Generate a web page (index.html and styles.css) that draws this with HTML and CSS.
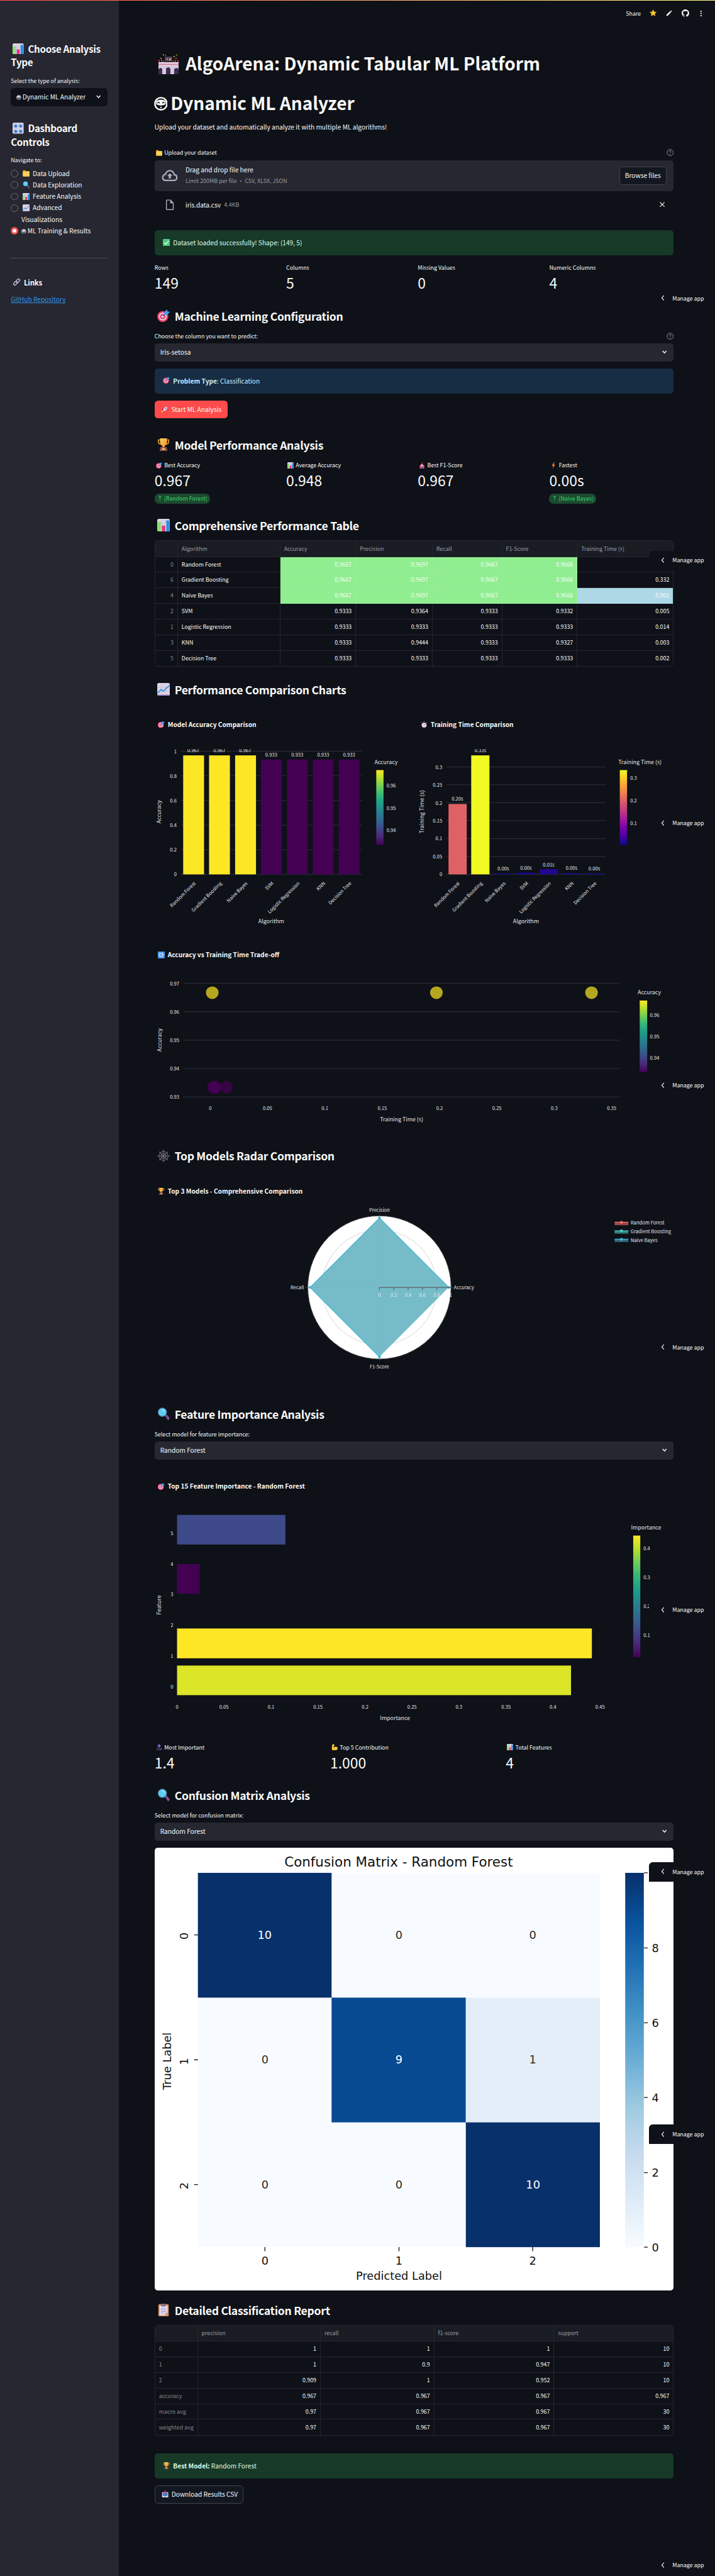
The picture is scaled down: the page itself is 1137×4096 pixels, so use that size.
FILE: index.html
```html
<!DOCTYPE html>
<html lang="en">
<head>
<meta charset="utf-8">
<title>AlgoArena</title>
<link rel="stylesheet" href="styles.css">
</head>
<body>
<svg class="defs" width="0" height="0" aria-hidden="true">
  <defs>
    <linearGradient id="viridis" x1="0" y1="1" x2="0" y2="0"><stop offset="0" stop-color="#440154"/><stop offset=".11" stop-color="#482878"/><stop offset=".22" stop-color="#3e4989"/><stop offset=".33" stop-color="#31688e"/><stop offset=".44" stop-color="#26828e"/><stop offset=".56" stop-color="#1f9e89"/><stop offset=".67" stop-color="#35b779"/><stop offset=".78" stop-color="#6ece58"/><stop offset=".89" stop-color="#b5de2b"/><stop offset="1" stop-color="#fde725"/></linearGradient>
    <linearGradient id="plasma" x1="0" y1="1" x2="0" y2="0"><stop offset="0" stop-color="#0d0887"/><stop offset=".11" stop-color="#46039f"/><stop offset=".22" stop-color="#7201a8"/><stop offset=".33" stop-color="#9c179e"/><stop offset=".44" stop-color="#bd3786"/><stop offset=".56" stop-color="#d8576b"/><stop offset=".67" stop-color="#ed7953"/><stop offset=".78" stop-color="#fb9f3a"/><stop offset=".89" stop-color="#fdca26"/><stop offset="1" stop-color="#f0f921"/></linearGradient>
    <linearGradient id="blues" x1="0" y1="1" x2="0" y2="0"><stop offset="0" stop-color="#f7fbff"/><stop offset=".125" stop-color="#deebf7"/><stop offset=".25" stop-color="#c6dbef"/><stop offset=".375" stop-color="#9ecae1"/><stop offset=".5" stop-color="#6baed6"/><stop offset=".625" stop-color="#4292c6"/><stop offset=".75" stop-color="#2171b5"/><stop offset=".875" stop-color="#08519c"/><stop offset="1" stop-color="#08306b"/></linearGradient>
    <linearGradient id="gold" x1="0" y1="0" x2="1" y2="1"><stop offset="0" stop-color="#ffd45a"/><stop offset="1" stop-color="#f08a2c"/></linearGradient>
  </defs>
  <symbol id="e-bars" viewBox="0 0 32 32"><rect width="32" height="32" rx="4" fill="#dcd5e6"/><path d="M0 11h32M0 21h32M11 0v32M21 0v32" stroke="#c2b8d0" stroke-width="1"/><path d="M1 8h8v24H4a4 4 0 0 1-3-3z" fill="#86e06c"/><rect x="12" y="17" width="8" height="15" fill="#e8337a"/><path d="M23 4h8v25a4 4 0 0 1-3 3h-5z" fill="#2f8de0"/></symbol>
  <symbol id="e-line" viewBox="0 0 32 32"><rect width="32" height="32" rx="4" fill="#dcd5e6"/><path d="M0 11h32M0 21h32M11 0v32M21 0v32" stroke="#c2b8d0" stroke-width="1"/><path d="M1 26 10 16l5 5L31 6" fill="none" stroke="#3a94dd" stroke-width="3"/><path d="M1 29q0 3 4 3h22q4 0 4-3z" fill="#b69ad0"/></symbol>
  <symbol id="e-folder" viewBox="0 0 32 32"><path d="M1 4a2 2 0 0 1 2-2h9l3 4h14a2 2 0 0 1 2 2v20a2 2 0 0 1-2 2H3a2 2 0 0 1-2-2z" fill="#e9a93a"/><rect x="1" y="9" width="30" height="21" rx="2" fill="#ffd057"/></symbol>
  <symbol id="e-search" viewBox="0 0 32 32"><path d="m19 20 4-3 8 9q1 5-4 6z" fill="#83508f"/><circle cx="13" cy="12" r="11.5" fill="#4a87b8"/><circle cx="13" cy="12" r="9.5" fill="#5fcdf0"/><path d="M12 5q6 0 6 6" stroke="#a5e8fb" stroke-width="2" fill="none"/></symbol>
  <symbol id="e-target" viewBox="0 0 32 32"><circle cx="14" cy="18" r="14" fill="#ea3a6b"/><circle cx="14" cy="18" r="10" fill="#e4d9ea"/><circle cx="14" cy="18" r="7" fill="#ea3a6b"/><circle cx="14" cy="18" r="3.4" fill="#e4d9ea"/><path d="m14 18 7-8" stroke="#3467b0" stroke-width="2"/><path d="m18 12 1-7 6-5 1 5 6 1-6 7-6 1z" fill="#3aa0f2"/></symbol>
  <symbol id="e-trophy" viewBox="0 0 32 32"><path d="M6 4H3v5q0 5 7 6M26 4h3v5q0 5-7 6" stroke="#eea22d" stroke-width="2.5" fill="none"/><path d="M7 0h18v6q0 10-6 13v4h-6v-4Q7 16 7 6z" fill="url(#gold)"/><path d="M8 22h16l2 10H6z" fill="#8c4a5c"/><rect x="12" y="25" width="8" height="4" fill="#ffc94a"/></symbol>
  <symbol id="e-check" viewBox="0 0 32 32"><rect width="32" height="32" rx="4" fill="#4fc981"/><path d="m6 16 7 8L26 9" fill="none" stroke="#fff" stroke-width="3.5"/></symbol>
  <symbol id="e-knobs" viewBox="0 0 32 32"><rect width="32" height="32" rx="4" fill="#d3d0ea"/><g fill="#2f83cf" stroke="#8379ab" stroke-dasharray="1 1.6"><circle cx="9" cy="10" r="4.4"/><circle cx="23" cy="10" r="4.4"/><circle cx="9" cy="25" r="4.4"/><circle cx="23" cy="25" r="4.4"/></g></symbol>
  <symbol id="e-link" viewBox="0 0 32 32"><g fill="none" stroke="#c3b8d2" stroke-width="3.6"><rect x="-8" y="-5" width="16" height="10" rx="5" transform="translate(21 11) rotate(-45)"/><rect x="-8" y="-5" width="16" height="10" rx="5" transform="translate(11 21) rotate(-45)"/></g></symbol>
  <symbol id="e-arena" viewBox="0 0 32 32"><path d="M0 13h32v19H0z" fill="#d7c8df"/><path d="M0 13h32v2.5H0z" fill="#f0e9f4"/><path d="M0 16h32" stroke="#d8405f" stroke-width="1"/><path d="M0 32v-8q4-4 6 0v8M12 32v-9q3.500-4 7 0v9M25 32v-8q4-4 7 0v8" fill="#3c2c50"/><rect x="10" y="4" width="12" height="8" fill="#50415f"/><path d="M13 7h2v2h-2zM17 7h3v3h-3z" fill="#e99c32"/><path d="M1 13V9M5 13V9M27 13V9M31 13V9M8 13v-3M24 13v-3" stroke="#dc2c4b" stroke-width="1.6"/><path d="M7 2l2-2M3 6l2 2M24 5l2-2M28 2l2-1M11 2l1 1M27 7l2-1" stroke="#e3a42c" stroke-width="1.3"/></symbol>
  <symbol id="e-rocket" viewBox="0 0 32 32"><path d="M1 31q0-9 7-10l4 3q-1 7-11 7" fill="#ffb02e"/><path d="m5 17 6-5 8 10-5 7z" fill="#c2185b"/><path d="M9 20Q15 4 30 1q1 15-15 25z" fill="#e2d8ee"/><path d="m22 3 8-2q1 6-2 9z" fill="#ec3c73"/><circle cx="20" cy="12" r="3.200" fill="#3c92dd"/></symbol>
  <symbol id="e-tent" viewBox="0 0 32 32"><path d="M15 0h2v8h-2z" fill="#9b3b58"/><path d="m17 0 7 3-7 2z" fill="#e83a68"/><path d="M16 6 28 17v15H4V17z" fill="#e03a66"/><path d="m16 9-6 8v15h12V17z" fill="#ddd0e3"/><path d="M12 32V22q4-5 8 0v10z" fill="#56365f"/></symbol>
  <symbol id="e-bolt" viewBox="0 0 32 32"><path d="M19 0 7 18h8l-3 14L25 12h-8l5-12z" fill="#f47b35"/></symbol>
  <symbol id="e-watch" viewBox="0 0 32 32"><path d="M11 0h10v3h-3v4h-4V3h-3z" fill="#44344f"/><path d="m3 8 4-3M29 8l-4-3" stroke="#8d7d9b" stroke-width="3"/><circle cx="16" cy="19" r="13" fill="#57456b"/><circle cx="16" cy="19" r="10.500" fill="#e1dbea"/><path d="m15 21 7-8" stroke="#e52d59" stroke-width="2.500"/></symbol>
  <symbol id="e-swap" viewBox="0 0 32 32"><rect width="32" height="32" rx="4" fill="#4593ee"/><path d="M8 13V9h15v6M24 19v4H9v-6M19 13l4 4 4-4M13 19l-4-4-4 4" fill="none" stroke="#fff" stroke-width="2.800"/></symbol>
  <symbol id="e-web" viewBox="0 0 32 32"><g fill="none" stroke="#b5aac2" stroke-width="1"><path d="M16 0v32M0 16h32M5 5l22 22M27 5 5 27"/><path d="M16 3q2 4 9 4 0 7 4 9-4 2-4 9-7 0-9 4-2-4-9-4 0-7-4-9 4-2 4-9 7 0 9-4z"/><path d="M16 9q1 2 5 2 0 4 2 5-2 1-2 5-4 0-5 2-1-2-5-2 0-4-2-5 2-1 2-5 4 0 5-2z"/></g></symbol>
  <symbol id="e-top" viewBox="0 0 32 32"><path d="m16 0 11 11h-7v8h-8v-8H5z" fill="#8263ca"/><path d="M3 23h8M7 23v9M24 32v-9h5v5h-5" fill="none" stroke="#8263ca" stroke-width="2.200"/><circle cx="17" cy="27.500" r="3.500" fill="none" stroke="#8263ca" stroke-width="2.200"/></symbol>
  <symbol id="e-arm" viewBox="0 0 32 32"><path d="M5 2q5-4 10 2l-1 7-4 1 3 6q9-8 16-1 6 9-2 13-14 5-24 0-2-16 2-28" fill="#ffc83d"/><path d="M2 27q10 3 25 3-12 4-24 0z" fill="#e28a30"/></symbol>
  <symbol id="e-clip" viewBox="0 0 32 32"><rect x="3" y="1" width="26" height="31" rx="3" fill="#dc935c"/><path d="M6 5h20v18l-6 6H6z" fill="#e9e0f2"/><path d="M20 29v-6h6z" fill="#b39ac4"/><rect x="10" y="0" width="12" height="7" rx="2" fill="#7e7390"/><path d="M9 12h14M9 16h14M9 20h14M9 24h8" stroke="#9c8fb0" stroke-width="1.400"/></symbol>
  <symbol id="e-inbox" viewBox="0 0 32 32"><rect x="2" y="8" width="28" height="24" rx="3" fill="#d8cfe6"/><path d="M5 11h22v10l-6 5H11l-6-5z" fill="#2f83dc"/><path d="M14 0h4v12h5l-7 8-7-8h5z" fill="#e2336d"/></symbol>
  <symbol id="e-face" viewBox="0 0 32 32"><circle cx="16" cy="16" r="14" fill="none" stroke="#fafafa" stroke-width="3.500"/><path d="M5 10q11-7 22 0v7q-5 3-11 3T5 17z" fill="#fafafa"/><path d="M8 15q2.500-5 5 0M19 15q2.500-5 5 0" fill="none" stroke="#15171f" stroke-width="2"/><circle cx="16" cy="24.500" r="1.800" fill="#fafafa"/></symbol>
  <symbol id="i-down" viewBox="0 0 16 16"><path d="m3 5 5 5.500L13 5" fill="none" stroke="currentColor" stroke-width="2.400"/></symbol>
  <symbol id="i-help" viewBox="0 0 24 24"><g fill="none" stroke="#9a9ba0" stroke-width="2"><circle cx="12" cy="12" r="10.500"/><path d="M9 9.500q0-3 3-3t3 3q0 1.500-3 3.500v1.500"/></g><circle cx="12" cy="17.300" r="1.300" fill="#9a9ba0"/></symbol>
</svg>

<div class="page">
  <div class="rainbow"></div>
  <aside class="sidebar">
    <h2 class="side-title"><svg class="emo"><use href="#e-bars"/></svg>Choose Analysis<br>Type</h2>
    <div class="label side-label">Select the type of analysis:</div>
    <div class="select select-dark"><span><svg class="face"><use href="#e-face"/></svg>Dynamic ML Analyzer</span><svg class="chev"><use href="#i-down"/></svg></div>
    <h2 class="side-title second"><svg class="emo"><use href="#e-knobs"/></svg>Dashboard<br>Controls</h2>
    <div class="label nav-label">Navigate to:</div>
    <ul class="radios">
      <li><i></i><span><svg class="emo"><use href="#e-folder"/></svg>Data Upload</span></li>
      <li><i></i><span><svg class="emo"><use href="#e-search"/></svg>Data Exploration</span></li>
      <li><i></i><span><svg class="emo"><use href="#e-bars"/></svg>Feature Analysis</span></li>
      <li><i></i><span><svg class="emo"><use href="#e-line"/></svg>Advanced<br>Visualizations</span></li>
      <li><i class="on"></i><span><svg class="face"><use href="#e-face"/></svg>ML Training &amp; Results</span></li>
    </ul>
    <hr class="rule">
    <h3 class="links-title"><svg class="emo"><use href="#e-link"/></svg>Links</h3>
    <a class="repo">GitHub Repository</a>
  </aside>

  <main class="main">
    <header class="toolbar">
      <span>Share</span>
      <svg class="t-star" viewBox="0 0 24 24"><path d="m12 1 3.200 7.200 7.800.8-5.900 5.200 1.800 7.800-6.900-4.100L5.100 22l1.800-7.800L1 9l7.800-.8z" fill="#ffc62b" stroke="#ffc62b" stroke-linejoin="round"/></svg>
      <svg class="t-pen" viewBox="0 0 24 24"><path d="M2 18 15 5l4 4L6 22H2zM16.500 3.500 18 2q1-.8 2 0l2 2q.8 1 0 2l-1.500 1.500z" fill="#fafafa"/></svg>
      <svg class="t-git" viewBox="0 0 16 16"><path fill="#fafafa" d="M8 0C3.580 0 0 3.580 0 8c0 3.540 2.290 6.530 5.470 7.590.4.070.55-.17.55-.38 0-.19-.01-.82-.01-1.490-2.010.37-2.530-.49-2.690-.94-.09-.23-.48-.94-.82-1.130-.28-.15-.68-.52-.01-.53.63-.01 1.080.58 1.230.82.72 1.210 1.870.87 2.330.66.070-.52.280-.87.510-1.070-1.780-.2-3.640-.89-3.640-3.950 0-.87.31-1.590.82-2.150-.08-.2-.36-1.020.08-2.120 0 0 .67-.21 2.200.82.64-.18 1.320-.27 2-.27s1.360.09 2 .27c1.530-1.040 2.200-.82 2.200-.82.44 1.100.16 1.920.08 2.120.51.56.82 1.270.82 2.150 0 3.070-1.870 3.750-3.650 3.950.29.25.54.73.54 1.480 0 1.070-.01 1.930-.01 2.200 0 .21.15.46.55.38A8 8 0 0 0 16 8c0-4.420-3.580-8-8-8"/></svg>
      <svg class="t-dots" viewBox="0 0 8 24"><g fill="#fafafa"><circle cx="4" cy="4" r="2.500"/><circle cx="4" cy="12" r="2.500"/><circle cx="4" cy="20" r="2.500"/></g></svg>
    </header>

    <h1 class="title"><svg class="emo"><use href="#e-arena"/></svg>AlgoArena: Dynamic Tabular ML Platform</h1>
    <h1 class="title subtitle"><svg class="face"><use href="#e-face"/></svg>Dynamic ML Analyzer</h1>
    <p class="lead">Upload your dataset and automatically analyze it with multiple ML algorithms!</p>

    <div class="label upload-label"><span><svg class="emo"><use href="#e-folder"/></svg>Upload your dataset</span><svg class="help"><use href="#i-help"/></svg></div>
    <section class="drop">
      <svg class="cloud" viewBox="0 0 44 32"><path d="M11 29.500q-8.500 0-8.500-8.500 0-7 7.500-8.500Q13 2.500 22 2.500q10 0 12 11 7.500.5 7.500 8t-8 8z" fill="none" stroke="#a9adbd" stroke-width="4"/><path d="M22 9.500 29.500 17H25v7h-6v-7h-4.500z" fill="#a9adbd"/></svg>
      <div class="drop-text"><div>Drag and drop file here</div><small>Limit 200MB per file • CSV, XLSX, JSON</small></div>
      <div class="btn ghost">Browse files</div>
    </section>
    <div class="file">
      <svg class="doc" viewBox="0 0 24 30"><path d="M3.500 2H14l7.500 8v16.500a2 2 0 0 1-2 2h-15a2 2 0 0 1-2-2V4a2 2 0 0 1 1-2z" fill="none" stroke="#a9adbd" stroke-width="2.500"/><path d="M13 2v9h9z" fill="#a9adbd"/></svg>
      <span>iris.data.csv</span><small>4.4KB</small>
      <svg class="close" viewBox="0 0 14 14"><path d="m1 1 12 12M13 1 1 13" stroke="#fafafa" stroke-width="2"/></svg>
    </div>
    <div class="alert success loaded"><svg class="emo"><use href="#e-check"/></svg>Dataset loaded successfully! Shape: (149, 5)</div>

    <div class="metrics m4 data-metrics">
      <div><div class="label">Rows</div><b>149</b></div>
      <div><div class="label">Columns</div><b>5</b></div>
      <div><div class="label">Missing Values</div><b>0</b></div>
      <div><div class="label">Numeric Columns</div><b>4</b></div>
    </div>

    <h2 class="head h-config"><svg class="emo"><use href="#e-target"/></svg>Machine Learning Configuration</h2>
    <div class="label field-label"><span>Choose the column you want to predict:</span><svg class="help"><use href="#i-help"/></svg></div>
    <div class="select"><span>Iris-setosa</span><svg class="chev"><use href="#i-down"/></svg></div>
    <div class="alert info"><svg class="emo"><use href="#e-target"/></svg><strong>Problem Type</strong>: Classification</div>
    <div class="btn primary"><svg class="emo"><use href="#e-rocket"/></svg>Start ML Analysis</div>

    <h2 class="head h-perf"><svg class="emo"><use href="#e-trophy"/></svg>Model Performance Analysis</h2>
    <div class="metrics m4 perf-metrics">
      <div><div class="label"><svg class="emo"><use href="#e-target"/></svg>Best Accuracy</div><b>0.967</b><span class="pill">↑ (Random Forest)</span></div>
      <div><div class="label"><svg class="emo"><use href="#e-bars"/></svg>Average Accuracy</div><b>0.948</b></div>
      <div><div class="label"><svg class="emo"><use href="#e-tent"/></svg>Best F1-Score</div><b>0.967</b></div>
      <div><div class="label"><svg class="emo"><use href="#e-bolt"/></svg>Fastest</div><b>0.00s</b><span class="pill">↑ (Naive Bayes)</span></div>
    </div>

    <h2 class="head h-table"><svg class="emo"><use href="#e-bars"/></svg>Comprehensive Performance Table</h2>
    <div class="frame perf-frame">
      <table class="grid">
        <colgroup><col class="a0"><col class="a1"><col class="a2"><col class="a3"><col class="a4"><col class="a5"><col></colgroup>
        <tr><th></th><th>Algorithm</th><th>Accuracy</th><th>Precision</th><th>Recall</th><th>F1-Score</th><th>Training Time (s)</th></tr>
        <tr><td class="idx">0</td><td class="name">Random Forest</td><td class="best">0.9667</td><td class="best">0.9697</td><td class="best">0.9667</td><td class="best">0.9666</td><td>0.197</td></tr>
        <tr><td class="idx">6</td><td class="name">Gradient Boosting</td><td class="best">0.9667</td><td class="best">0.9697</td><td class="best">0.9667</td><td class="best">0.9666</td><td>0.332</td></tr>
        <tr><td class="idx">4</td><td class="name">Naive Bayes</td><td class="best">0.9667</td><td class="best">0.9697</td><td class="best">0.9667</td><td class="best">0.9666</td><td class="fast">0.001</td></tr>
        <tr><td class="idx">2</td><td class="name">SVM</td><td>0.9333</td><td>0.9364</td><td>0.9333</td><td>0.9332</td><td>0.005</td></tr>
        <tr><td class="idx">1</td><td class="name">Logistic Regression</td><td>0.9333</td><td>0.9333</td><td>0.9333</td><td>0.9333</td><td>0.014</td></tr>
        <tr><td class="idx">3</td><td class="name">KNN</td><td>0.9333</td><td>0.9444</td><td>0.9333</td><td>0.9327</td><td>0.003</td></tr>
        <tr><td class="idx">5</td><td class="name">Decision Tree</td><td>0.9333</td><td>0.9333</td><td>0.9333</td><td>0.9333</td><td>0.002</td></tr>
      </table>
    </div>

    <h2 class="head h-charts"><svg class="emo"><use href="#e-line"/></svg>Performance Comparison Charts</h2>
    <div class="chart-row">
      <svg class="chart" viewBox="415 1900 690 620">
        <use href="#e-target" x="423" y="1936" width="19" height="19"/>
        <text class="ct" x="450" y="1952">Model Accuracy Comparison</text>
        <path class="gl" d="M485 2017.500h487M485 2083.500h487M485 2149.500h487M485 2216h487M485 2282h487M485 2348h487"/>
        <g fill="#fde725"><rect x="491.500" y="2028.500" width="56" height="319.500"/><rect x="561" y="2028.500" width="56" height="319.500"/><rect x="631" y="2028.500" width="56" height="319.500"/></g>
        <g fill="#440154"><rect x="700.500" y="2039.500" width="56" height="308.500"/><rect x="770" y="2039.500" width="56" height="308.500"/><rect x="839.500" y="2039.500" width="56" height="308.500"/><rect x="909" y="2039.500" width="56" height="308.500"/></g>
        <g class="tk e"><text x="474" y="2023">1</text><text x="474" y="2089">0.8</text><text x="474" y="2155">0.6</text><text x="474" y="2221">0.4</text><text x="474" y="2287">0.2</text><text x="474" y="2353">0</text></g>
        <clipPath id="c1"><rect x="485" y="2012" width="487" height="336"/></clipPath>
        <g class="tk m" clip-path="url(#c1)"><text x="519" y="2020.500">0.967</text><text x="589" y="2020.500">0.967</text><text x="658" y="2020.500">0.967</text><text x="728" y="2031.500">0.933</text><text x="798" y="2031.500">0.933</text><text x="867.500" y="2031.500">0.933</text><text x="937" y="2031.500">0.933</text></g>
        <g class="tk e"><text transform="translate(526 2373) rotate(-45)">Random Forest</text><text transform="translate(596 2373) rotate(-45)">Gradient Boosting</text><text transform="translate(665 2373) rotate(-45)">Naive Bayes</text><text transform="translate(735 2373) rotate(-45)">SVM</text><text transform="translate(805 2373) rotate(-45)">Logistic Regression</text><text transform="translate(874 2373) rotate(-45)">KNN</text><text transform="translate(944 2373) rotate(-45)">Decision Tree</text></g>
        <text class="ax m" x="728" y="2480">Algorithm</text>
        <text class="ax m" transform="translate(432 2180) rotate(-90)">Accuracy</text>
        <text class="ax" x="1005" y="2052">Accuracy</text>
        <rect x="1010" y="2068" width="19.500" height="201" fill="url(#viridis)"/>
        <g class="tk"><text x="1037.500" y="2115">0.96</text><text x="1037.500" y="2175">0.95</text><text x="1037.500" y="2235">0.94</text></g>
      </svg>
      <svg class="chart" viewBox="1105 1900 704 620">
        <use href="#e-watch" x="1130" y="1936" width="19" height="19"/>
        <text class="ct" x="1157" y="1952">Training Time Comparison</text>
        <path class="gl" d="M1199 2059.500h428M1199 2107.500h428M1199 2155.500h428M1199 2203.500h428M1199 2252h428M1199 2300h428M1199 2348h428"/>
        <rect x="1205" y="2159" width="49" height="189" fill="#de6164"/><rect x="1266" y="2028.500" width="49" height="319.500" fill="#f0f921"/>
        <g fill="#130789"><rect x="1327.500" y="2345.500" width="49" height="2.500"/><rect x="1388.500" y="2343" width="49" height="5"/><rect x="1450" y="2334" width="49" height="14" fill="#220690"/><rect x="1511" y="2345" width="49" height="3"/><rect x="1572" y="2345.500" width="49" height="2.500"/></g>
        <g class="tk e"><text x="1188" y="2065">0.3</text><text x="1188" y="2113">0.25</text><text x="1188" y="2161">0.2</text><text x="1188" y="2209">0.15</text><text x="1188" y="2257">0.1</text><text x="1188" y="2305">0.05</text><text x="1188" y="2353">0</text></g>
        <clipPath id="c2"><rect x="1199" y="2012" width="428" height="336"/></clipPath>
        <g class="tk m" clip-path="url(#c2)"><text x="1229" y="2150.500">0.20s</text><text x="1290.500" y="2020.500">0.33s</text><text x="1352" y="2337.500">0.00s</text><text x="1413" y="2335.500">0.00s</text><text x="1474" y="2327">0.01s</text><text x="1535.500" y="2336.500">0.00s</text><text x="1596.500" y="2337.500">0.00s</text></g>
        <g class="tk e"><text transform="translate(1236 2373) rotate(-45)">Random Forest</text><text transform="translate(1297 2373) rotate(-45)">Gradient Boosting</text><text transform="translate(1359 2373) rotate(-45)">Naive Bayes</text><text transform="translate(1420 2373) rotate(-45)">SVM</text><text transform="translate(1481 2373) rotate(-45)">Logistic Regression</text><text transform="translate(1542 2373) rotate(-45)">KNN</text><text transform="translate(1603 2373) rotate(-45)">Decision Tree</text></g>
        <text class="ax m" x="1413" y="2480">Algorithm</text>
        <text class="ax m" transform="translate(1139 2180) rotate(-90)">Training Time (s)</text>
        <text class="ax" x="1661" y="2052">Training Time (s)</text>
        <rect x="1665" y="2068" width="19.500" height="201" fill="url(#plasma)"/>
        <g class="tk"><text x="1693" y="2095">0.3</text><text x="1693" y="2155">0.2</text><text x="1693" y="2215">0.1</text></g>
      </svg>
    </div>
    <svg class="chart" viewBox="415 2520 1394 550">
      <use href="#e-swap" x="423" y="2555" width="19" height="19"/>
      <text class="ct" x="450" y="2571">Accuracy vs Training Time Trade-off</text>
      <path class="gl" d="M492 2640.500h1172.500M492 2717h1172.500M492 2793.500h1172.500M492 2869.500h1172.500M492 2946h1172.500"/>
      <g fill="#fde725" opacity=".7"><circle cx="569.500" cy="2666" r="17"/><circle cx="1171.500" cy="2666" r="17"/><circle cx="1588" cy="2666" r="17"/></g>
      <g fill="#440154" fill-opacity=".7"><circle cx="572.500" cy="2920" r="17"/><circle cx="575" cy="2920" r="17"/><circle cx="579" cy="2920" r="17"/><circle cx="608.500" cy="2920" r="17"/></g>
      <g class="tk e"><text x="481" y="2646">0.97</text><text x="481" y="2722">0.96</text><text x="481" y="2799">0.95</text><text x="481" y="2875">0.94</text><text x="481" y="2951">0.93</text></g>
      <g class="tk m"><text x="564" y="2981">0</text><text x="718" y="2981">0.05</text><text x="872" y="2981">0.1</text><text x="1026" y="2981">0.15</text><text x="1180" y="2981">0.2</text><text x="1334" y="2981">0.25</text><text x="1488" y="2981">0.3</text><text x="1642" y="2981">0.35</text></g>
      <text class="ax m" x="1078" y="3011">Training Time (s)</text>
      <text class="ax m" transform="translate(433 2793) rotate(-90)">Accuracy</text>
      <text class="ax" x="1712" y="2670.500">Accuracy</text>
      <rect x="1717.500" y="2687" width="20" height="192.500" fill="url(#viridis)"/>
      <g class="tk"><text x="1745" y="2730.500">0.96</text><text x="1745" y="2788.500">0.95</text><text x="1745" y="2845.500">0.94</text></g>
    </svg>

    <h2 class="head h-radar"><svg class="emo"><use href="#e-web"/></svg>Top Models Radar Comparison</h2>
    <svg class="chart radar" viewBox="415 3140 1394 610">
      <use href="#e-trophy" x="423" y="3188" width="19" height="19"/>
      <text class="ct" x="450" y="3204">Top 3 Models - Comprehensive Comparison</text>
      <circle cx="1018.500" cy="3456" r="192.300" fill="#fff" stroke="#444" stroke-width="1.500"/>
      <g fill="none" stroke="#b8b8b8"><circle cx="1018.500" cy="3456" r="38.500"/><circle cx="1018.500" cy="3456" r="77"/><circle cx="1018.500" cy="3456" r="115.500"/><circle cx="1018.500" cy="3456" r="154"/></g>
      <path d="M1018.500 3257v398M819 3456h399" stroke="#555" fill="none"/>
      <path d="M1204.500 3456 1018.500 3269.500 832.500 3456l186 186.500z" fill="#6fb8c5" fill-opacity=".95"/>
      <path d="M1204.500 3456 1018.500 3269.500 832.500 3456l186 186.500" fill="none" stroke="#45b7d1" stroke-width="2.400"/>
      <g fill="#45b7d1"><circle cx="1204.500" cy="3456" r="3.800"/><circle cx="1018.500" cy="3269.500" r="3.800"/><circle cx="832.500" cy="3456" r="3.800"/><circle cx="1018.500" cy="3642.500" r="3.800"/></g>
      <path d="M1018.500 3456h192M1018.500 3456v7M1057 3456v7M1095.500 3456v7M1134 3456v7M1172.500 3456v7" stroke="#5a6268" stroke-width="2"/>
      <g class="tk m"><text x="1018.500" y="3480.500">0</text><text x="1057" y="3480.500">0.2</text><text x="1095.500" y="3480.500">0.4</text><text x="1134" y="3480.500">0.6</text><text x="1172.500" y="3480.500">0.8</text><text x="1210" y="3480.500">1</text><text x="1018.500" y="3253">Precision</text><text x="1018.500" y="3673">F1-Score</text></g>
      <text class="tk e" x="816" y="3461.500">Recall</text><text class="tk" x="1218.500" y="3461.500">Accuracy</text>
      <rect x="1650" y="3281" width="37" height="8" fill="#954747"/><path d="M1650 3281h37" stroke="#ff6b6b" stroke-width="2.400"/><circle cx="1668.500" cy="3281" r="3.800" fill="#ff6b6b"/>
      <rect x="1650" y="3304" width="37" height="7.500" fill="#338077"/><path d="M1650 3304h37" stroke="#4ecdc4" stroke-width="2.400"/><circle cx="1668.500" cy="3304" r="3.800" fill="#4ecdc4"/>
      <rect x="1650" y="3326.500" width="37" height="7.500" fill="#2e6a7b"/><path d="M1650 3326.500h37" stroke="#45b7d1" stroke-width="2.400"/><circle cx="1668.500" cy="3326.500" r="3.800" fill="#45b7d1"/>
      <g class="tk lg"><text x="1693" y="3287.500">Random Forest</text><text x="1693" y="3310.500">Gradient Boosting</text><text x="1693" y="3333.500">Naive Bayes</text></g>
    </svg>

    <h2 class="head h-feature"><svg class="emo"><use href="#e-search"/></svg>Feature Importance Analysis</h2>
    <div class="label field-label">Select model for feature importance:</div>
    <div class="select"><span>Random Forest</span><svg class="chev"><use href="#i-down"/></svg></div>
    <svg class="chart importance" viewBox="415 3940 1394 720">
      <use href="#e-target" x="423" y="3982" width="19" height="19"/>
      <text class="ct" x="450" y="3998">Top 15 Feature Importance - Random Forest</text>
      <rect x="475" y="4068" width="291" height="79.500" fill="#3e4989"/><rect x="475" y="4200" width="61" height="79.500" fill="#440154"/><rect x="475" y="4373" width="1114" height="80" fill="#fde725"/><rect x="475" y="4472.500" width="1058" height="79.500" fill="#dce527"/>
      <g class="tk e"><text x="465" y="4122">5</text><text x="465" y="4205">4</text><text x="465" y="4287">3</text><text x="465" y="4369">2</text><text x="465" y="4452">1</text><text x="465" y="4534">0</text></g>
      <g class="tk m"><text x="475" y="4588">0</text><text x="601" y="4588">0.05</text><text x="727.500" y="4588">0.1</text><text x="853.500" y="4588">0.15</text><text x="980" y="4588">0.2</text><text x="1106" y="4588">0.25</text><text x="1232" y="4588">0.3</text><text x="1358.500" y="4588">0.35</text><text x="1484.500" y="4588">0.4</text><text x="1611" y="4588">0.45</text></g>
      <text class="ax m" x="1060.500" y="4618.500">Importance</text>
      <text class="ax m" transform="translate(432 4310) rotate(-90)">Feature</text>
      <text class="ax" x="1694" y="4107.500">Importance</text>
      <rect x="1700" y="4123.500" width="19" height="326.500" fill="url(#viridis)"/>
      <g class="tk"><text x="1727.500" y="4162.500">0.4</text><text x="1727.500" y="4240">0.3</text><text x="1727.500" y="4318">0.2</text><text x="1727.500" y="4396">0.1</text></g>
    </svg>
    <div class="metrics m3">
      <div><div class="label"><svg class="emo"><use href="#e-top"/></svg>Most Important</div><b>1.4</b></div>
      <div><div class="label"><svg class="emo"><use href="#e-arm"/></svg>Top 5 Contribution</div><b>1.000</b></div>
      <div><div class="label"><svg class="emo"><use href="#e-bars"/></svg>Total Features</div><b>4</b></div>
    </div>

    <h2 class="head h-matrix"><svg class="emo"><use href="#e-search"/></svg>Confusion Matrix Analysis</h2>
    <div class="label field-label">Select model for confusion matrix:</div>
    <div class="select"><span>Random Forest</span><svg class="chev"><use href="#i-down"/></svg></div>
    <svg class="chart matrix" viewBox="415 4962 1394 1189.500">
      <rect x="531" y="5029.500" width="1079.500" height="1005" fill="#f7fbff"/>
      <rect x="531" y="5029.500" width="359" height="335" fill="#08306b"/><rect x="890" y="5364.500" width="360.500" height="335" fill="#084a91"/><rect x="1250.500" y="5364.500" width="360" height="335" fill="#e3eef9"/><rect x="1250.500" y="5699.500" width="360" height="335" fill="#08306b"/>
      <rect x="1678.500" y="5029.500" width="50" height="1005" fill="url(#blues)"/>
      <path d="M521 5196h10M521 5531.500h10M521 5866.500h10M711 6034.500v11M1071 6034.500v11M1430 6034.500v11M1729 5029.500h10M1729 5231h10M1729 5432h10M1729 5632.500h10M1729 5834.500h10M1729 6034.500h10" stroke="#111" stroke-width="2.200"/>
      <text class="mt" x="1070" y="5012">Confusion Matrix - Random Forest</text>
      <g class="mx"><text x="1071" y="5207">0</text><text x="1430" y="5207">0</text><text x="711" y="5542">0</text><text x="1430" y="5542">1</text><text x="711" y="5877">0</text><text x="1071" y="5877">0</text></g>
      <g class="mx light"><text x="710" y="5207">10</text><text x="1071" y="5542">9</text><text x="1431" y="5877">10</text></g>
      <g class="mx dark"><text x="711" y="6081">0</text><text x="1071" y="6081">1</text><text x="1430" y="6081">2</text><text x="1071" y="6122">Predicted Label</text><text transform="translate(459 5535) rotate(-90)">True Label</text><text transform="translate(504 5199) rotate(-90)">0</text><text transform="translate(504 5536) rotate(-90)">1</text><text transform="translate(504 5870) rotate(-90)">2</text></g>
      <g class="mx dark s"><text x="1750" y="5041">10</text><text x="1750" y="5242">8</text><text x="1750" y="5443">6</text><text x="1750" y="5644">4</text><text x="1750" y="5845">2</text><text x="1750" y="6047">0</text></g>
    </svg>

    <h2 class="head h-report"><svg class="emo"><use href="#e-clip"/></svg>Detailed Classification Report</h2>
    <div class="frame report-frame">
      <table class="grid">
        <colgroup><col class="b0"><col class="b1"><col class="b2"><col class="b3"><col></colgroup>
        <tr><th></th><th>precision</th><th>recall</th><th>f1-score</th><th>support</th></tr>
        <tr><td class="idx l">0</td><td>1</td><td>1</td><td>1</td><td>10</td></tr>
        <tr><td class="idx l">1</td><td>1</td><td>0.9</td><td>0.947</td><td>10</td></tr>
        <tr><td class="idx l">2</td><td>0.909</td><td>1</td><td>0.952</td><td>10</td></tr>
        <tr><td class="idx l">accuracy</td><td>0.967</td><td>0.967</td><td>0.967</td><td>0.967</td></tr>
        <tr><td class="idx l">macro avg</td><td>0.97</td><td>0.967</td><td>0.967</td><td>30</td></tr>
        <tr><td class="idx l">weighted avg</td><td>0.97</td><td>0.967</td><td>0.967</td><td>30</td></tr>
      </table>
    </div>
    <div class="alert success best-model"><svg class="emo"><use href="#e-trophy"/></svg><strong>Best Model:</strong>&nbsp;Random Forest</div>
    <div class="btn ghost download"><svg class="emo"><use href="#e-inbox"/></svg>Download Results CSV</div>
  </main>

  <div class="manage p1"><svg viewBox="0 0 10 16"><path d="M8 1.500 2.500 8 8 14.500"/></svg>Manage app</div>
  <div class="manage p2"><svg viewBox="0 0 10 16"><path d="M8 1.500 2.500 8 8 14.500"/></svg>Manage app</div>
  <div class="manage p3"><svg viewBox="0 0 10 16"><path d="M8 1.500 2.500 8 8 14.500"/></svg>Manage app</div>
  <div class="manage p4"><svg viewBox="0 0 10 16"><path d="M8 1.500 2.500 8 8 14.500"/></svg>Manage app</div>
  <div class="manage p5"><svg viewBox="0 0 10 16"><path d="M8 1.500 2.500 8 8 14.500"/></svg>Manage app</div>
  <div class="manage p6"><svg viewBox="0 0 10 16"><path d="M8 1.500 2.500 8 8 14.500"/></svg>Manage app</div>
  <div class="manage p7"><svg viewBox="0 0 10 16"><path d="M8 1.500 2.500 8 8 14.500"/></svg>Manage app</div>
  <div class="manage p8"><svg viewBox="0 0 10 16"><path d="M8 1.500 2.500 8 8 14.500"/></svg>Manage app</div>
  <div class="manage p9"><svg viewBox="0 0 10 16"><path d="M8 1.500 2.500 8 8 14.500"/></svg>Manage app</div>
</div>
</body>
</html>
```
FILE: styles.css
```css
/* 1rem = 100 layout units; the full layout is 19.2rem wide */
html { font-size: 59.21875px; background: #0e1117; }
* { box-sizing: border-box; }
body {
  margin: 0;
  font-family: "Noto Sans CJK SC", "Source Sans Pro", "Noto Sans", sans-serif;
  font-size: .172rem;
  color: #fafafa;
}
h1, h2, h3, p, ul { margin: 0; padding: 0; }
.defs { position: absolute; }
.page { position: relative; display: flex; width: 19.2rem; height: 4096px; overflow: hidden; background: #0e1117; }
.rainbow { position: absolute; z-index: 2; left: 0; top: 0; width: 100%; height: 1px; background: linear-gradient(90deg, #ff4b4b, #fffd80); }
svg { display: block; flex: none; }
small { font-size: .15rem; color: #9a9ba0; }
.label { font-size: .15rem; height: .24rem; padding-bottom: .02rem; display: flex; align-items: center; white-space: nowrap; }
.label .emo { width: .17rem; height: .17rem; margin: 0 .06rem 0 .03rem; }
.label > span { display: flex; align-items: center; }

/* sidebar */
.sidebar { width: 3.19rem; flex: none; background: #262730; padding: 1.125rem .3rem 0 .29rem; }
.side-title { font-size: .256rem; line-height: .36rem; font-weight: 600; white-space: nowrap; letter-spacing: -.005rem; }
.side-title .emo { display: inline-block; width: .3rem; height: .3rem; margin: 0 .11rem 0 .05rem; vertical-align: -.045rem; }
.side-title.second { margin-top: .415rem; }
.side-label { margin-top: .215rem; }
.sidebar .select { margin-top: .07rem; }
.nav-label { margin-top: .205rem; }
.radios { list-style: none; margin-top: .075rem; }
.radios li { display: flex; line-height: .308rem; white-space: nowrap; }
.radios i { width: .2rem; height: .2rem; border-radius: 50%; border: 1px solid #6b6c73; margin: .059rem .085rem 0 0; flex: none; }
.radios i.on { border: .06rem solid #ff4b4b; background: #fff; }
.radios .emo { display: inline-block; width: .19rem; height: .19rem; margin: 0 .075rem 0 .04rem; vertical-align: -.03rem; }
.face { display: inline-block; width: .13rem; height: .13rem; margin-right: .035rem; vertical-align: -.01rem; }
.rule { border: 0; height: 1px; background: #4c4d55; margin: .57rem 0 0; }
.links-title { font-size: .194rem; font-weight: 600; height: .3rem; display: flex; align-items: center; margin-top: .49rem; letter-spacing: -.003rem; }
.links-title .emo { width: .22rem; height: .22rem; margin: 0 .08rem 0 .05rem; }
.repo { display: block; margin-top: .165rem; line-height: .3rem; color: #3094ee; text-decoration: underline; }

/* main column */
.main { width: 13.94rem; margin-left: .96rem; flex: none; display: flex; flex-direction: column; align-items: stretch; }
.toolbar { height: .4rem; margin: .155rem -1rem 0 0; align-self: flex-end; display: flex; align-items: center; font-size: .15rem; width: 2.284rem; }
.toolbar span { width: .64rem; }
.t-star { width: .19rem; height: .19rem; }
.t-pen { width: .17rem; height: .17rem; margin-left: .25rem; }
.t-git { width: .2rem; height: .2rem; margin-left: .25rem; }
.t-dots { width: .06rem; height: .18rem; margin-left: .29rem; }

.title { height: .7rem; margin-top: .815rem; padding-bottom: .07rem; font-size: .473rem; font-weight: 700; display: flex; align-items: center; white-space: nowrap; }
.title .emo { width: .54rem; height: .54rem; margin: .07rem .19rem 0 .1rem; }
.subtitle { margin-top: .37rem; }
.title .face { width: .37rem; height: .37rem; margin: .05rem .08rem 0 -.02rem; }
.lead { height: .3rem; line-height: .28rem; margin-top: .14rem; }
.upload-label { margin-top: .41rem; justify-content: space-between; }
.help { width: .19rem; height: .19rem; }
.drop { height: .82rem; margin-top: .08rem; background: #262730; border-radius: .08rem; display: flex; align-items: center; padding: 0 .19rem; }
.cloud { width: .44rem; height: .31rem; }
.drop-text { margin-left: .2rem; flex: 1; line-height: .3rem; padding-bottom: .02rem; }
.drop-text small { display: block; }
.btn { height: .48rem; border-radius: .09rem; display: flex; align-items: center; white-space: nowrap; }
.ghost { border: 1px solid #41444e; background: #131720; padding: 0 .14rem .02rem; }
.file { height: .4rem; margin-top: .17rem; display: flex; align-items: center; padding: 0 .24rem 0 .29rem; }
.doc { width: .24rem; height: .29rem; margin-right: .3rem; }
.file small { margin-left: .09rem; }
.close { width: .14rem; height: .14rem; margin-left: auto; }
.alert { height: .67rem; border-radius: .08rem; display: flex; align-items: center; padding: 0 0 .02rem .23rem; }
.alert .emo { width: .19rem; height: .19rem; margin-right: .08rem; }
.success { background: #173928; color: #dffde9; }
.info { background: #172d43; color: #c7ebff; margin-top: .19rem; }
.loaded { margin-top: .48rem; }

.metrics { display: grid; height: .82rem; }
.m4 { grid-template-columns: repeat(4, 3.533rem); }
.m3 { grid-template-columns: repeat(3, 4.715rem); margin-top: .21rem; }
.metrics b { display: block; font-weight: 400; font-size: .387rem; line-height: .56rem; height: .56rem; margin-top: -.005rem; }
.data-metrics { margin-top: .23rem; }
.perf-metrics { margin-top: .17rem; height: 1.15rem; }
.pill { display: inline-block; height: .27rem; line-height: .255rem; margin-top: .085rem; padding: 0 .07rem; border-radius: .12rem; background: #1c4a30; color: #3dd56d; font-size: .15rem; white-space: nowrap; }

.head { height: .5rem; padding-bottom: .035rem; font-size: .297rem; font-weight: 600; letter-spacing: -.005rem; display: flex; align-items: center; white-space: nowrap; }
.head .emo { width: .34rem; height: .34rem; margin: 0 .13rem 0 .07rem; }
.h-config { margin-top: .35rem; }
.h-perf { margin-top: .48rem; }
.h-table { margin-top: .34rem; }
.h-charts { margin-top: .39rem; }
.h-radar { margin-top: .1rem; }
.h-feature { margin-top: .23rem; }
.h-matrix { margin-top: .34rem; }
.h-report { margin-top: .295rem; }
.field-label { margin-top: .165rem; justify-content: space-between; }
.select { height: .48rem; margin-top: .07rem; background: #262730; border-radius: .08rem; display: flex; align-items: center; justify-content: space-between; padding: 0 .17rem .02rem .15rem; white-space: nowrap; }
.select-dark { background: #0e1117; }
.chev { width: .16rem; height: .16rem; }
.primary { margin-top: .19rem; background: #ff4b4b; align-self: flex-start; width: 1.96rem; padding: 0 0 .02rem .18rem; }
.btn .emo { width: .19rem; height: .19rem; margin-right: .08rem; }

/* data tables */
.frame { margin-top: .14rem; border: 1px solid #26282f; border-radius: .08rem; overflow: hidden; }
.perf-frame { height: 3.38rem; }
.report-frame { height: 2.965rem; margin-top: .13rem; }
.grid { width: 100%; table-layout: fixed; border-spacing: 0; font-size: .15rem; }
.grid th, .grid td { height: .42rem; padding: 0 .1rem; line-height: .3rem; border-right: 1px solid #23262d; border-bottom: 1px solid #23262d; text-align: right; font-weight: 400; white-space: nowrap; }
.grid th { height: .425rem; text-align: left; background: #1a1c24; color: #9a9ba0; }
.grid tr > :last-child { border-right: 0; }
.grid tr:last-child td { border-bottom: 0; }
.grid td.name, .grid td.l { text-align: left; }
.grid .idx { color: #85868b; }
.grid td.best { background: #90ee90; border-color: #9beb9b; }
.grid td.fast { background: #add8e6; border-color: #add8e6; }
.a0 { width: .61rem; } .a1 { width: 2.75rem; } .a2 { width: 2.035rem; } .a3 { width: 2.055rem; } .a4 { width: 1.87rem; } .a5 { width: 2.02rem; }
.b0 { width: 1.145rem; } .b1 { width: 3.3rem; } .b2 { width: 3.05rem; } .b3 { width: 3.22rem; }

/* charts */
.chart-row { display: grid; grid-template-columns: 6.9rem 7.04rem; margin-top: .22rem; height: 6.2rem; }
.chart { width: 100%; }
.radar { margin-top: .1rem; }
.importance { margin-top: .21rem; }
.matrix { margin-top: .19rem; background: #fff; border-radius: .08rem; }
.chart text { fill: #e3e5ea; }
.chart .ct { font-size: 17.2px; font-weight: 700; fill: #fafafa; }
.ax { font-size: 15px; }
.tk { font-size: 12.9px; }
.e { text-anchor: end; }
.m { text-anchor: middle; }
.gl { stroke: #31333f; stroke-width: 1.6; }
.chart .mt, .chart .mx { font-family: "DejaVu Sans", sans-serif; text-anchor: middle; }
.chart .mt { font-size: 36.2px; fill: #111; }
.mx { font-size: 30px; }
.chart .mx text { fill: #2a2a2a; }
.chart .light text { fill: #fff; }
.chart .dark text { fill: #111; }
.chart .s { text-anchor: start; }

.best-model { margin-top: .485rem; }
.download { margin-top: .19rem; width: 2.39rem; align-self: flex-start; padding-left: .17rem; }

/* floating app-management tabs */
.manage { position: absolute; right: 0; width: 1.77rem; height: .52rem; background: #0e1117; border-radius: .1rem 0 0 0; display: flex; align-items: center; font-size: .15rem; padding: 0 0 .01rem .31rem; white-space: nowrap; }
.manage svg { width: .1rem; height: .16rem; margin-right: .215rem; fill: none; stroke: #fafafa; stroke-width: 2; }
.p1 { top: 7.75rem; } .p2 { top: 14.79rem; } .p3 { top: 21.84rem; } .p4 { top: 28.88rem; } .p5 { top: 35.92rem; }
.p6 { top: 42.97rem; } .p7 { top: 50rem; } .p8 { top: 57.05rem; } .p9 { top: 68.62rem; }
```
